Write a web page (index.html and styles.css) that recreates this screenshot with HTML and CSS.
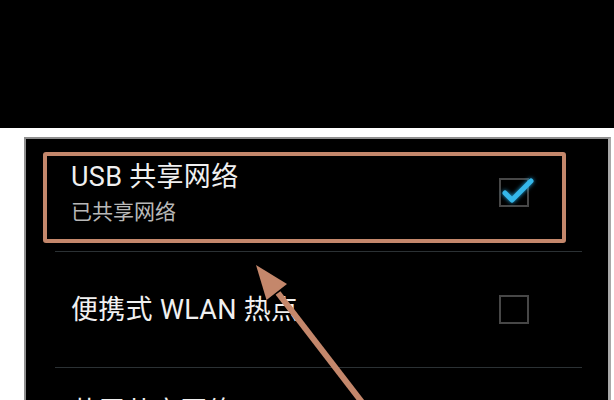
FILE: index.html
```html
<!DOCTYPE html>
<html lang="zh-CN">
<head>
<meta charset="utf-8">
<title>网络共享与便携式热点</title>
<link rel="stylesheet" href="styles.css">
</head>
<body>
<div class="screen">
  <div class="topbar"></div>
  <div class="gap"></div>
  <div class="panel">
    <div class="row row-first row-sub">
      <div class="label">
        <div class="title">USB 共享网络</div>
        <div class="summary">已共享网络</div>
      </div>
      <span class="check on">
        <svg class="tick" viewBox="0 0 40 30" width="40" height="30">
          <polyline points="4,13 11,20 30,1" fill="none" stroke="#35b7ea" stroke-width="5" stroke-linecap="round" stroke-linejoin="round"/>
        </svg>
      </span>
    </div>
    <div class="row row-mid">
      <div class="label">
        <div class="title">便携式 WLAN 热点</div>
      </div>
      <span class="check"></span>
    </div>
    <div class="row row-sub row-last">
      <div class="label">
        <div class="title">蓝牙共享网络</div>
        <div class="summary">未共享网络</div>
      </div>
      <span class="check"></span>
    </div>
    <div class="highlight"></div>
  </div>
  <svg class="arrow" viewBox="0 0 614 400" width="614" height="400">
    <line x1="278" y1="293" x2="368" y2="410" stroke="#c4876b" stroke-width="6"/>
    <polygon points="256,265 287,284 266.5,300" fill="#c4876b"/>
  </svg>
</div>
</body>
</html>
```

FILE: styles.css
```css
html, body {
  margin: 0;
  padding: 0;
  background: #ffffff;
  overflow: hidden;
}

.screen {
  position: relative;
  width: 614px;
  height: 400px;
  overflow: hidden;
  font-family: Roboto, "Noto Sans CJK SC", sans-serif;
}

.topbar {
  height: 128px;
  background: #000000;
}

.gap {
  height: 9px;
  background: #ffffff;
}

.panel {
  position: relative;
  margin: 0 3px 0 24px;
  height: 300px;
  background: #000000;
  border-top: 2px solid #8e8e8e;
  border-left: 2px solid #8e8e8e;
  border-right: 3px solid #a8a8a8;
}

.row {
  display: flex;
  align-items: center;
  margin: 0 26px 0 29px;
  padding: 0 53px 0 16px;
  border-bottom: 1px solid #2b3134;
}

.row-first {
  height: 112px;
}

.row-mid {
  height: 115px;
}

.row-last {
  height: 115px;
}

.row-sub {
  align-items: flex-start;
}

.row-sub .label {
  padding-top: 22px;
}

.row-last .label {
  padding-top: 28px;
}

.row-sub .check {
  align-self: center;
  margin-top: -6px;
}

.label {
  flex: 1;
}

.title {
  color: #f0f0f0;
  font-size: 27px;
  line-height: 32px;
  letter-spacing: 0.3px;
}

.summary {
  color: #b8b8b8;
  font-size: 21px;
  line-height: 30px;
  margin-top: 4px;
}

.check {
  position: relative;
  width: 26px;
  height: 25px;
  border: 2px solid #474747;
  flex: none;
}

.tick {
  position: absolute;
  left: 0;
  top: 0;
  overflow: visible;
  filter: drop-shadow(0 0 2px #1f9fd6);
}

.highlight {
  position: absolute;
  left: 17px;
  top: 13px;
  width: 523px;
  height: 91px;
  box-sizing: border-box;
  border: 4px solid #c4876b;
  border-radius: 3px;
}

.arrow {
  position: absolute;
  left: 0;
  top: 0;
  pointer-events: none;
}
```
